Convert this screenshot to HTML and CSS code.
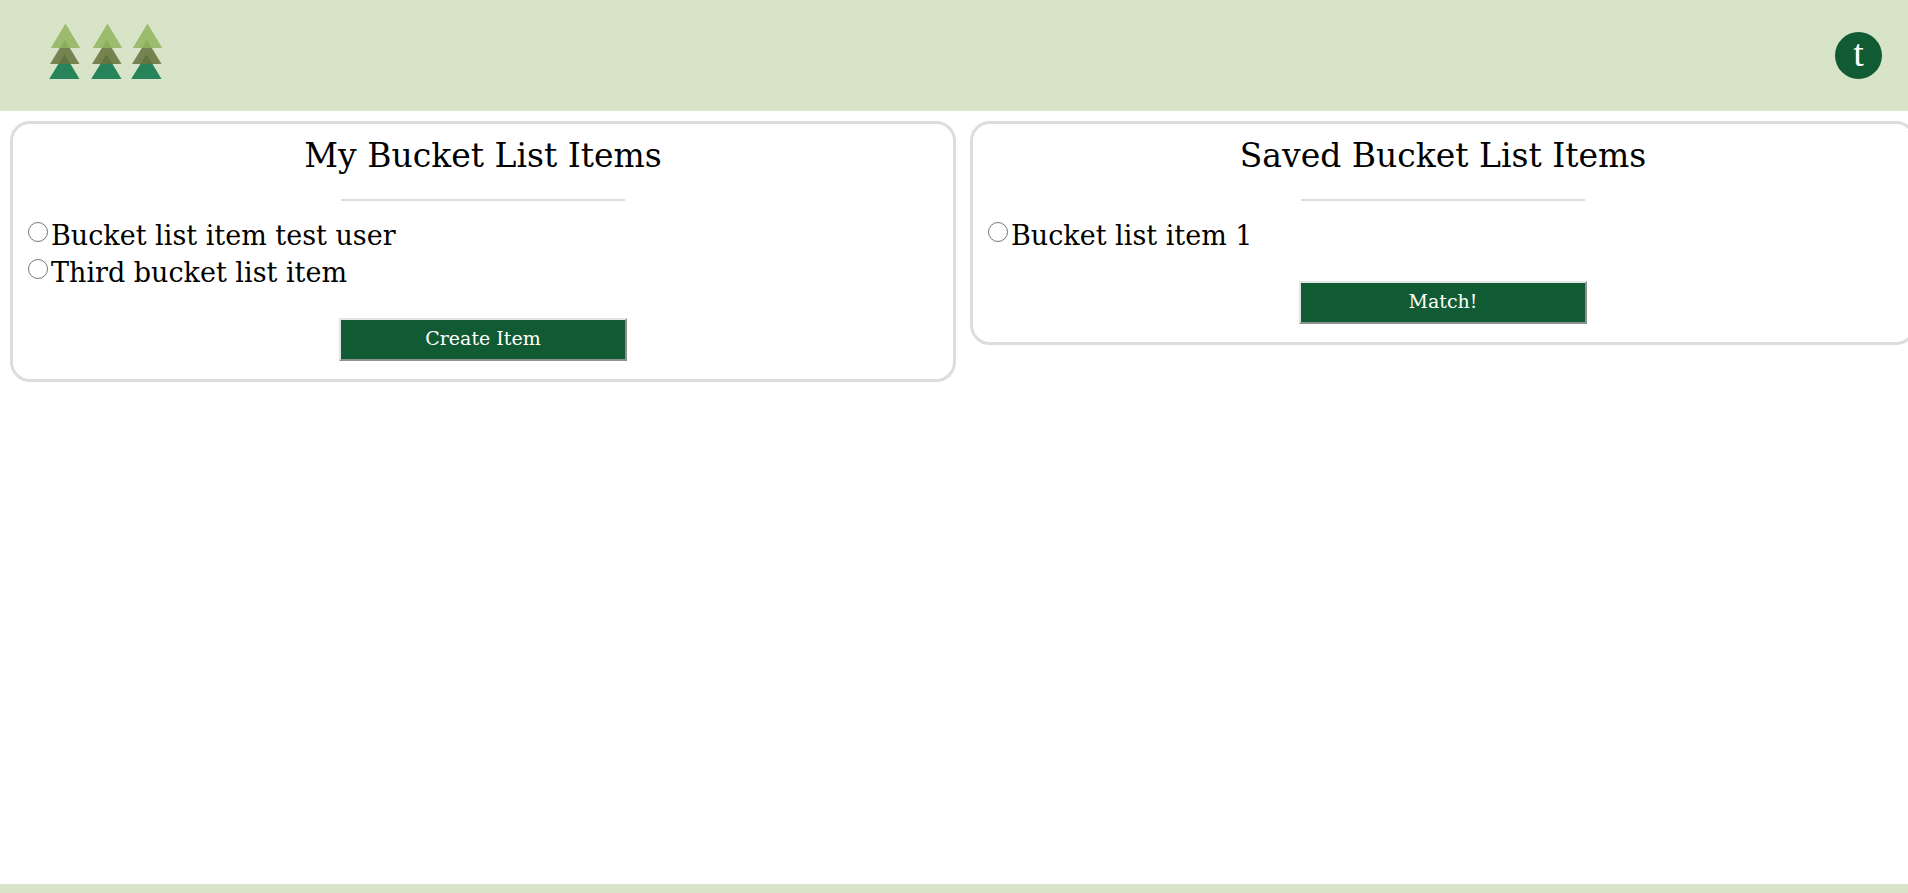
FILE: index.html
```html
<!DOCTYPE html>
<html lang="en">
<head>
<meta charset="utf-8">
<title>Bucket List</title>
<link rel="stylesheet" href="styles.css">
</head>
<body>
<header class="topbar">
  <a class="logo" href="#" aria-label="Home">
    <svg width="114" height="58" viewBox="49 23 114 58" aria-hidden="true">
      <defs>
        <g id="tree">
          <path fill="#278359" d="M64.5 54 79.5 79H49.2z"/>
          <path fill="#76824f" d="M64.9 39.8 79.5 64H50z"/>
          <path fill="#607540" d="M64.5 54 70.4 64H58.6z"/>
          <path fill="#9bbb6e" d="M65.5 23.4 80.2 48H50.8z"/>
          <path fill="#8aad5e" d="M64.9 39.8 69.7 48H60.1z"/>
        </g>
      </defs>
      <use href="#tree"/>
      <use href="#tree" x="42"/>
      <use href="#tree" x="82"/>
    </svg>
  </a>
  <button class="avatar" type="button">t</button>
</header>
<main class="lists">
  <section class="card">
    <h1 class="card-title">My Bucket List Items</h1>
    <hr class="rule">
    <ul class="items">
      <li class="item"><input class="pick" type="radio" name="mine" id="mine-1"><label for="mine-1">Bucket list item test user</label></li>
      <li class="item"><input class="pick" type="radio" name="mine" id="mine-2"><label for="mine-2">Third bucket list item</label></li>
    </ul>
    <button class="action" type="button">Create Item</button>
  </section>
  <section class="card">
    <h1 class="card-title">Saved Bucket List Items</h1>
    <hr class="rule">
    <ul class="items">
      <li class="item"><input class="pick" type="radio" name="saved" id="saved-1"><label for="saved-1">Bucket list item 1</label></li>
    </ul>
    <button class="action" type="button">Match!</button>
  </section>
</main>
<footer class="bottombar"></footer>
</body>
</html>
```
FILE: styles.css
```css
* { box-sizing: border-box; }

body {
  margin: 0;
  min-height: 100vh;
  display: flex;
  flex-direction: column;
  overflow-x: hidden;
  background: #fff;
  color: #000;
  font-family: "DejaVu Serif", serif;
}

.topbar {
  display: flex;
  align-items: center;
  justify-content: space-between;
  padding: 23px 26px 30px 49px;
  background: #d7e4c7;
}

.logo, .logo svg { display: block; }

.avatar {
  width: 47px;
  height: 47px;
  margin-top: 6px;
  padding: 0 0 4px;
  border: 0;
  border-radius: 50%;
  background: #115b34;
  color: #fff;
  font: 38px/40px "Liberation Serif", serif;
}

.lists {
  flex: 1;
  display: flex;
  align-items: flex-start;
  gap: 14px;
  padding: 10px;
}

.card {
  flex: none;
  width: calc(50vw - 8px);
  padding: 8px 15px 18px;
  border: 3px solid #ddd;
  border-radius: 20px;
}

.card-title {
  margin: 0;
  font-size: 33px;
  font-weight: 400;
  line-height: 48px;
  text-align: center;
}

.rule {
  width: 284px;
  height: 2px;
  margin: 19px auto 16px;
  border: 0;
  background: #ddd;
}

.items {
  margin: 0;
  padding: 0;
  list-style: none;
  font-size: 27px;
  line-height: 37px;
}

.item { display: flex; gap: 3px; }

.pick {
  flex: none;
  width: 20px;
  height: 20px;
  margin: 5px 0 0;
}

.action {
  display: block;
  width: 288px;
  margin: 27px auto 0;
  padding: 0 6px 2px;
  border: 2px outset #e4e4e4;
  background: #115b34;
  color: #fff;
  font-family: inherit;
  font-size: 19px;
  line-height: 37px;
}

.bottombar { height: 9px; background: #d7e4c7; }
```
